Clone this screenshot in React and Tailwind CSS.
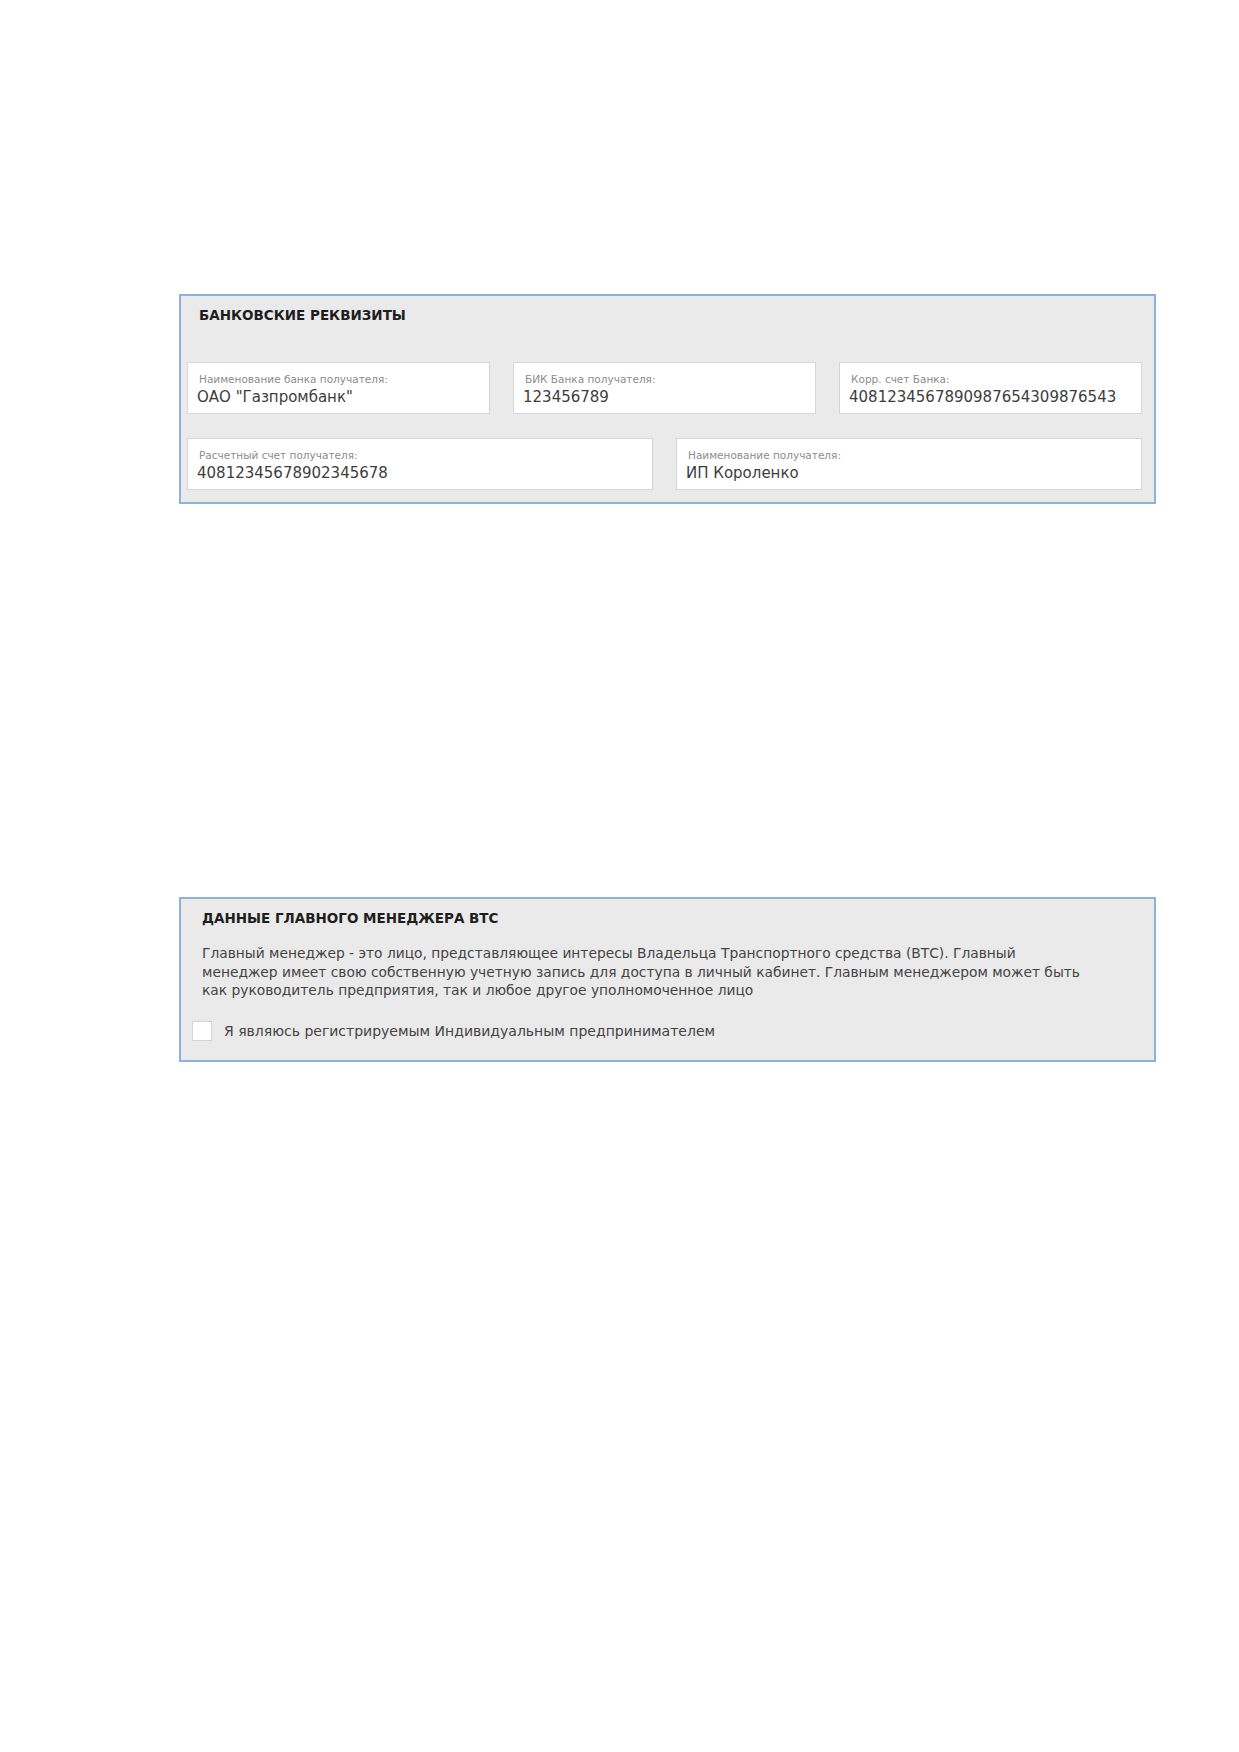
import React from "react";

const font = { fontFamily: '"DejaVu Sans", "Open Sans", sans-serif' };

const Field = ({ label, value }) => {
  return (
    <div className="h-[52px] bg-white border border-[#d6d6d6] pt-[10px]">
      <div className="pl-[11px] text-[10.5px] leading-[12px] text-[#8c8c8c] whitespace-nowrap">
        {label}
      </div>
      <div className="pl-[9px] mt-[3px] text-[15px] leading-[18px] text-[#3d3d3d] whitespace-nowrap overflow-hidden">
        {value}
      </div>
    </div>
  );
};

const App = () => {
  return (
    <div className="min-h-[1752px] bg-white pt-[294px] pl-[179px]" style={font}>
      {/* bank details */}
      <section className="w-[977px] h-[210px] border-2 border-[#8cb2dc] bg-[#eaeaea] pt-[11px]">
        <h2 className="pl-[18px] text-[13.5px] leading-[16px] font-bold text-[#1e1e1e]">
          БАНКОВСКИЕ РЕКВИЗИТЫ
        </h2>
        <div className="pl-[6px] pr-[12px] mt-[39px] flex flex-col gap-[24px]">
          <div className="grid grid-cols-3 gap-x-[23px]">
            <Field label="Наименование банка получателя:" value='ОАО "Газпромбанк"' />
            <Field label="БИК Банка получателя:" value="123456789" />
            <Field label="Корр. счет Банка:" value="4081234567890987654309876543" />
          </div>
          <div className="grid grid-cols-2 gap-x-[23px]">
            <Field label="Расчетный счет получателя:" value="40812345678902345678" />
            <Field label="Наименование получателя:" value="ИП Короленко" />
          </div>
        </div>
      </section>

      {/* main manager */}
      <section className="mt-[393px] w-[977px] h-[165px] border-2 border-[#8cb2dc] bg-[#eaeaea] pt-[11px] pl-[11px]">
        <h2 className="ml-[10px] text-[13.5px] leading-[16px] font-bold text-[#1e1e1e]">
          ДАННЫЕ ГЛАВНОГО МЕНЕДЖЕРА ВТС
        </h2>
        <p className="ml-[10px] mt-[18px] text-[13.8px] leading-[18.5px] text-[#444] whitespace-nowrap">
          Главный менеджер - это лицо, представляющее интересы Владельца Транспортного средства (ВТС). Главный
          <br />
          менеджер имеет свою собственную учетную запись для доступа в личный кабинет. Главным менеджером может быть
          <br />
          как руководитель предприятия, так и любое другое уполномоченное лицо
        </p>
        <label className="mt-[21px] flex items-center gap-[12px] cursor-pointer">
          <span className="w-[20px] h-[20px] bg-white border border-[#d3d3d3] shrink-0" />
          <span className="text-[14px] leading-[18px] text-[#444]">
            Я являюсь регистрируемым Индивидуальным предпринимателем
          </span>
        </label>
      </section>
    </div>
  );
};

export default App;
